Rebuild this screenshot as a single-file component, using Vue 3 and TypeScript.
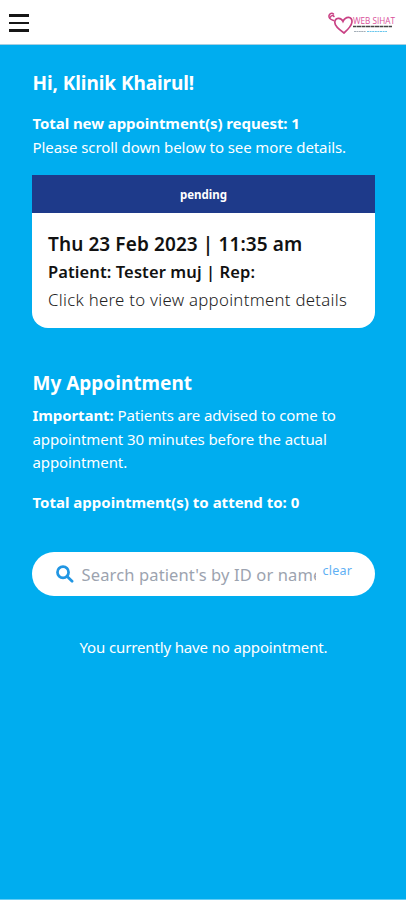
<script setup lang="ts">
import { ref } from 'vue'

interface Appointment {
  status: string
  when: string
  patient: string
}

const requests: Appointment[] = [
  { status: 'pending', when: 'Thu 23 Feb 2023 | 11:35 am', patient: 'Patient: Tester muj | Rep:' },
]
const attending = ref(0)
const query = ref('')
</script>

<template>
  <div class="page">
    <header class="topbar">
      <button class="menu" aria-label="Menu"><i></i><i></i><i></i></button>
      <svg class="logo" viewBox="0 0 70 24" width="70" height="24">
        <g fill="none" stroke="#c94184" stroke-linecap="round">
          <path stroke-width="1.7" d="M17 22 C12 18.500 7.800 15 7.800 11.500 C7.800 6.500 14 6 16 10.500 C18.500 5 25.500 5 25 11 C24.500 15 21 18.500 17 22" />
          <path stroke-width="1.5" d="M6.500 9.500 C3.500 8.500 1.500 6.500 2 4.500 C2.500 2.500 5 1.500 6.500 3 M3.500 6 C4 4.500 6 4 7 5.500" />
        </g>
        <text class="brand" x="26" y="12.500" textLength="42" lengthAdjust="spacingAndGlyphs">WEB SIHAT</text>
        <path d="M26 15.500H65" stroke="#444" stroke-width="1.300" stroke-dasharray="3 .5 5 .5" />
        <path d="M27 20.500H39" stroke="#9aa6b0" stroke-width=".9" stroke-dasharray="2 .4" />
        <path d="M40 20.500H60" stroke="#68c6ec" stroke-width="1.100" stroke-dasharray="2 .6" />
      </svg>
    </header>

    <main class="content">
      <h1 class="greeting">Hi, Klinik Khairul!</h1>
      <p class="strong total-new">Total new appointment(s) request: {{ requests.length }}</p>
      <p class="hint">Please scroll down below to see more details.</p>

      <article v-for="item in requests" :key="item.when" class="card">
        <div class="status">{{ item.status }}</div>
        <div class="details">
          <h2 class="when">{{ item.when }}</h2>
          <p class="patient">{{ item.patient }}</p>
          <p class="link">Click here to view appointment details</p>
        </div>
      </article>

      <h2 class="section">My Appointment</h2>
      <p class="notice"><b>Important:</b> Patients are advised to come to<br />appointment 30 minutes before the actual<br />appointment.</p>
      <p class="strong total-attend">Total appointment(s) to attend to: {{ attending }}</p>

      <div class="search">
        <svg class="glass" viewBox="0 0 18 18" width="18" height="18">
          <circle cx="7.200" cy="7.200" r="5.700" />
          <path d="M11.500 11.500L16.500 16.500" />
        </svg>
        <input v-model="query" class="field" placeholder="Search patient's by ID or name" />
        <button class="clear" @click="query = ''">clear</button>
      </div>

      <p class="empty">You currently have no appointment.</p>
    </main>
  </div>
</template>

<style>
body {
  margin: 0;
  background: #00adef;
}
</style>

<style scoped>
.page {
  box-sizing: border-box;
  height: 900px;
  overflow: hidden;
  background: #00adef;
  border-bottom: 1px solid #64cdf5;
  color: #fff;
  font-family: "Noto Sans", "Open Sans", sans-serif;
  font-size: 15px;
}
h1, h2, p {
  margin: 0;
  white-space: nowrap;
}
button {
  border: 0;
  padding: 0;
  background: none;
  font-family: inherit;
}
.topbar {
  box-sizing: border-box;
  height: 45px;
  padding: 0 9px 0 9px;
  display: flex;
  justify-content: space-between;
  background: #fff;
  border-bottom: 1px solid #a5cfe2;
}
.menu {
  display: flex;
  flex-direction: column;
  gap: 5px;
  padding-top: 14px;
}
.menu i {
  width: 20px;
  height: 2.500px;
  background: #161616;
}
.logo {
  margin-top: 11px;
}
.brand {
  font: 8.500px "Open Sans", sans-serif;
  fill: #d94f9a;
}
.content {
  padding: 24px 31px 0 32px;
}
.greeting,
.total-new,
.hint,
.section,
.notice,
.total-attend {
  padding-left: 0.5px;
}
.greeting {
  font-size: 19px;
  line-height: 28px;
  letter-spacing: -0.08px;
}
.strong {
  font-weight: 700;
}
.total-new {
  margin-top: 14px;
  line-height: 24px;
  letter-spacing: -0.07px;
}
.hint {
  line-height: 24px;
  letter-spacing: -0.09px;
}
.card {
  margin-top: 16px;
  height: 153px;
  border-radius: 0 0 16px 16px;
  background: #fff;
  color: #111;
  overflow: hidden;
}
.status {
  height: 38px;
  line-height: 40px;
  background: #1e3a8a;
  color: #fff;
  text-align: center;
  font-size: 11.500px;
  font-weight: 700;
}
.details {
  padding: 17px 16px 0;
}
.when {
  font-size: 19px;
  font-weight: 600;
  line-height: 28px;
  letter-spacing: 0.1px;
}
.patient {
  font-size: 16.500px;
  font-weight: 600;
  line-height: 28px;
  letter-spacing: 0.1px;
}
.link {
  font-size: 16.800px;
  font-weight: 300;
  line-height: 27px;
  letter-spacing: 0.29px;
  color: #222;
}
.section {
  margin-top: 41px;
  font-size: 19px;
  line-height: 28px;
}
.notice {
  margin-top: 7px;
  line-height: 23.700px;
  letter-spacing: -0.09px;
}
.total-attend {
  margin-top: 15px;
  line-height: 24px;
}
.search {
  box-sizing: border-box;
  margin-top: 38.300px;
  height: 44px;
  padding: 0 23px 0 24px;
  border-radius: 22px;
  background: #fff;
  display: flex;
  align-items: center;
}
.glass {
  fill: none;
  stroke: #2196e3;
  stroke-width: 2.800;
  stroke-linecap: round;
}
.field {
  width: 234px;
  height: 26px;
  margin-left: 8px;
  padding: 0;
  box-sizing: border-box;
  border: 0;
  outline: 0;
  color: #333;
  font: 16.500px "Noto Sans", sans-serif;
  letter-spacing: 0.13px;
}
.field::placeholder {
  color: #9ca3af;
}
.clear {
  margin: -8px 0 0 7px;
  color: #60b0f4;
  font-size: 12.500px;
  letter-spacing: 0.2px;
}
.empty {
  margin-top: 38.700px;
  line-height: 24px;
  text-align: center;
  letter-spacing: -0.14px;
}
</style>
